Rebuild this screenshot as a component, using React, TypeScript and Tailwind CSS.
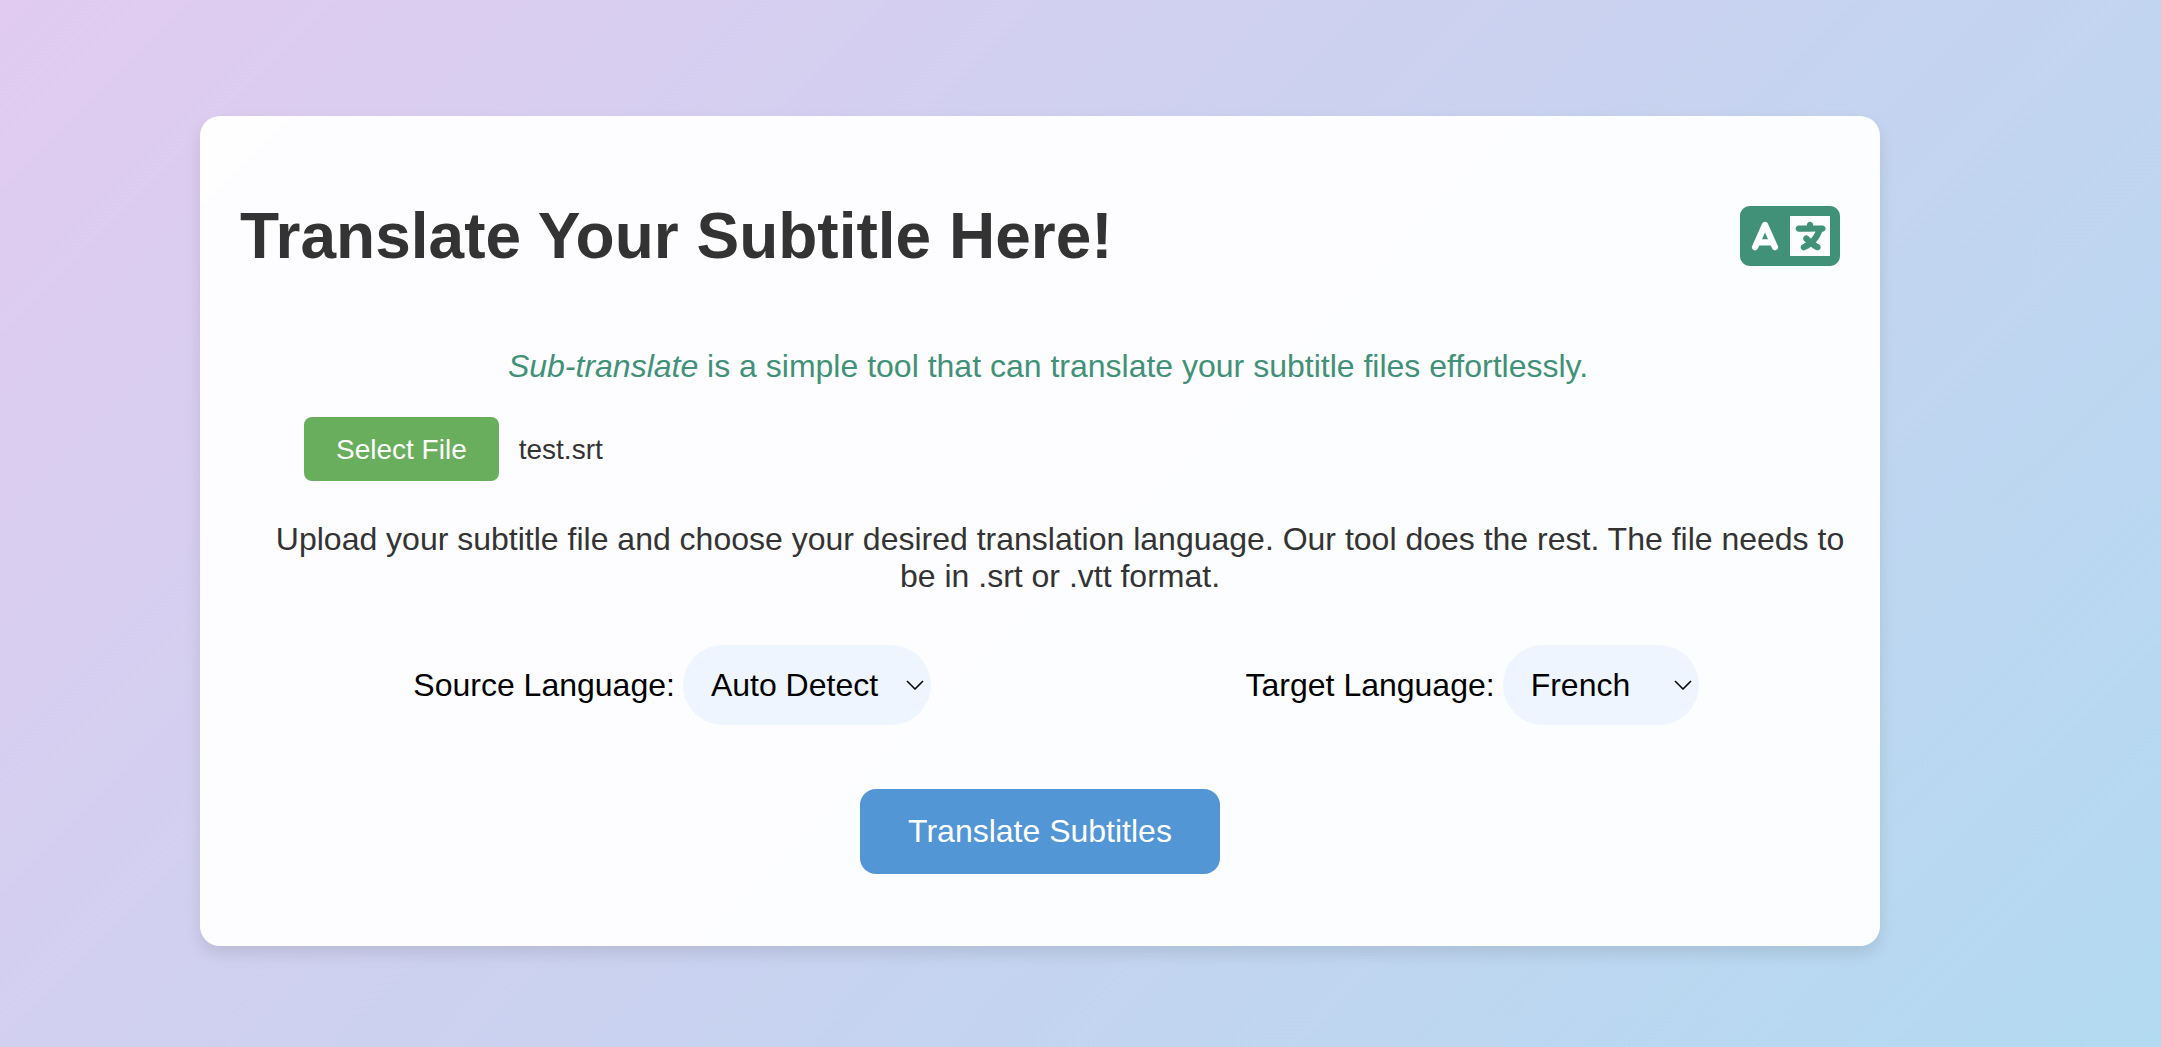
import { ChevronDown } from "lucide-react";
import { useState } from "react";
import { FaLanguage } from "react-icons/fa6";

type LanguageSelectProps = {
  id: string;
  label: string;
  value: string;
  options: string[];
  width: string;
  onChange: (value: string) => void;
};

function LanguageSelect({ id, label, value, options, width, onChange }: LanguageSelectProps) {
  return (
    <div className="flex items-center gap-2 text-black">
      <label htmlFor={id}>{label}</label>
      <div className="relative">
        <select
          id={id}
          value={value}
          onChange={(e) => onChange(e.target.value)}
          className={`h-20 appearance-none rounded-[40px] bg-[#eff5ff] pl-7 ${width}`}
        >
          {options.map((o) => (
            <option key={o}>{o}</option>
          ))}
        </select>
        <ChevronDown className="pointer-events-none absolute right-0 top-6 size-8" strokeWidth={1.25} strokeLinecap="butt" />
      </div>
    </div>
  );
}

export default function App() {
  const [source, setSource] = useState("Auto Detect");
  const [target, setTarget] = useState("French");
  return (
    <div className="min-h-screen bg-linear-135 from-[#e1cbf0] via-[#cad2f0] to-[#b2daf1] pt-29 pb-25 pl-50 pr-[281px] font-['Liberation_Sans',Arial,sans-serif] text-[32px] leading-[37px] text-[#333]">
      <main className="rounded-[20px] bg-white/95 px-10 pt-20 pb-18 shadow-[0_8px_16px_rgba(0,0,0,0.1)]">
        <header className="flex items-center justify-between">
          <h1 className="text-[64px] leading-20 font-bold">Translate Your Subtitle Here!</h1>
          <FaLanguage className="h-20 w-25 text-[#419178]" />
        </header>
        <p className="mt-18 pl-4 text-center text-[#419178]">
          <em>Sub-translate</em> is a simple tool that can translate your subtitle files effortlessly.
        </p>
        <div className="mt-8 ml-16 flex items-center gap-5 text-[28px]">
          <button type="button" className="h-16 rounded-lg bg-[#69ae5c] px-8 text-white">
            Select File
          </button>
          <span>test.srt</span>
        </div>
        <p className="mt-10 -mr-2 pl-8 text-center">
          Upload your subtitle file and choose your desired translation language. Our tool does the rest. The file needs to be in .srt or .vtt format.
        </p>
        <div className="mt-[50px] -mr-4 ml-4 flex justify-around">
          <LanguageSelect id="source" label="Source Language:" value={source} options={["Auto Detect", "English", "French"]} width="w-62" onChange={setSource} />
          <LanguageSelect id="target" label="Target Language:" value={target} options={["French", "English", "German"]} width="w-49" onChange={setTarget} />
        </div>
        <div className="mt-16 flex justify-center">
          <button type="button" className="h-[85px] rounded-2xl bg-[#5296d5] px-12 text-white">
            Translate Subtitles
          </button>
        </div>
      </main>
    </div>
  );
}
